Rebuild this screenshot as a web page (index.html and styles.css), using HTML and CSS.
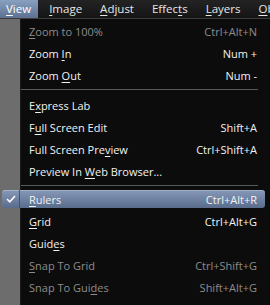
FILE: index.html
```html
<!DOCTYPE html>
<html>
<head>
    <link rel="stylesheet" href="styles.css">
</head>
<body>
    <div class="menubar">
        <span class="top-item active"><u>V</u>iew</span>
        <span class="top-item"><u>I</u>mage</span>
        <span class="top-item"><u>A</u>djust</span>
        <span class="top-item">Effec<u>t</u>s</span>
        <span class="top-item"><u>L</u>ayers</span>
        <span class="top-item"><u>O</u>b</span>
    </div>

    <div class="dropdown">
        <div class="item disabled"><span class="label"><u>Z</u>oom to 100%</span><span class="keys">Ctrl+Alt+N</span></div>
        <div class="item"><span class="label">Zoom <u>I</u>n</span><span class="keys">Num +</span></div>
        <div class="item"><span class="label">Zoom <u>O</u>ut</span><span class="keys">Num -</span></div>
        <div class="sep"></div>
        <div class="item"><span class="label">E<u>x</u>press Lab</span><span class="keys"></span></div>
        <div class="item"><span class="label">F<u>u</u>ll Screen Edit</span><span class="keys">Shift+A</span></div>
        <div class="item"><span class="label">Full Screen Pre<u>v</u>iew</span><span class="keys">Ctrl+Shift+A</span></div>
        <div class="item"><span class="label">Preview In <u>W</u>eb Browser...</span><span class="keys"></span></div>
        <div class="sep"></div>
        <div class="item checked">
            <span class="check">
                <svg width="10" height="8" viewBox="0 0 10 8"><path d="M1 4 L3.8 6.8 L9 1" fill="none" stroke="#fff" stroke-width="1.6"/></svg>
            </span>
            <span class="label"><u>R</u>ulers</span><span class="keys">Ctrl+Alt+R</span>
        </div>
        <div class="item"><span class="label"><u>G</u>rid</span><span class="keys">Ctrl+Alt+G</span></div>
        <div class="item"><span class="label">Guid<u>e</u>s</span><span class="keys"></span></div>
        <div class="item disabled"><span class="label"><u>S</u>nap To Grid</span><span class="keys">Ctrl+Shift+G</span></div>
        <div class="item disabled"><span class="label">Snap To Gui<u>d</u>es</span><span class="keys">Shift+Alt+G</span></div>
    </div>
</body>
</html>
```

FILE: styles.css
```css
/* Dark themed View menu */
body {
    margin: 0;
    width: 270px;
    height: 305px;
    overflow: hidden;
    font-family: "Open Sans", "Noto Sans", sans-serif;
    font-size: 11px;
    background-color: #6d6d6d;
}

u {
    text-underline-offset: 2px;
}

.menubar {
    display: flex;
    height: 18px;
    background: linear-gradient(#232323, #151515);
    color: #e6e6e6;
    font-size: 11.5px;
    white-space: nowrap;
    overflow: hidden;
}

.top-item {
    padding: 0 9px;
    line-height: 18px;
}

.top-item.active {
    padding: 0 7px 0 6px;
    margin-right: 2px;
    background: linear-gradient(#8aa0c0, #5d7193);
    color: #fff;
}

.dropdown {
    border-top: 1px solid #3c3c3c;
    background: linear-gradient(to right, #6d6d6d 0, #6d6d6d 20px, #1a1a1a 20px, #1a1a1a 21px, #0c0c0c 21px);
    height: 286px;
    padding-top: 1px;
}

.item {
    display: flex;
    align-items: center;
    height: 22px;
    padding: 0 13px 0 29px;
    color: #f2f2f2;
    white-space: nowrap;
}

.item .label {
    flex: 1;
}

.item.disabled {
    color: #8c8c8c;
}

.sep {
    height: 1px;
    margin: 3px 12px 4px 21px;
    background-color: #595959;
}

.item.checked {
    position: relative;
    height: 18px;
    margin: 2px 5px 2px 2px;
    padding: 0 8px 0 27px;
    border-radius: 3px;
    background: linear-gradient(#8799b8, #5a6c8c);
    box-shadow: inset 0 1px 0 rgba(255, 255, 255, 0.25);
}

.check {
    position: absolute;
    left: 0;
    top: 0;
    width: 17px;
    height: 18px;
    display: flex;
    align-items: center;
    justify-content: center;
    border-right: 1px solid #46556f;
}
```
